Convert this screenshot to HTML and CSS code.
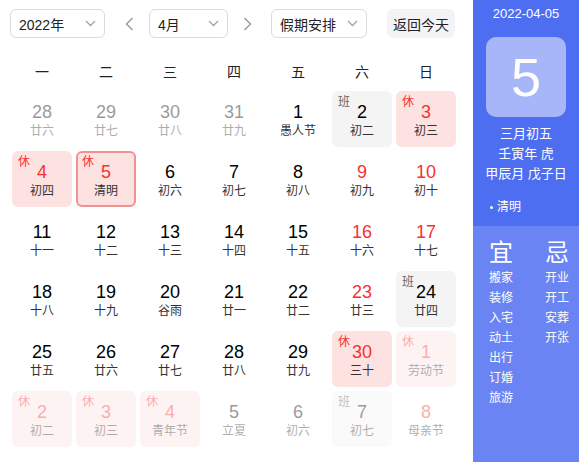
FILE: index.html
```html
<!DOCTYPE html>
<html>
<head>
<meta charset="utf-8">
<link rel="stylesheet" href="styles.css">
</head>
<body>
<div class="app">
  <div class="main">
    <div class="toolbar">
      <div class="select year"><span>2022年</span><svg class="chev" width="11" height="7" viewBox="0 0 11 7"><path d="M1 1l4.5 4.5L10 1" fill="none" stroke="#a0a3ab" stroke-width="1.3"/></svg></div>
      <svg class="arrow left" width="9" height="14" viewBox="0 0 9 14"><path d="M7.5 1L1.5 7l6 6" fill="none" stroke="#9a9da5" stroke-width="1.5"/></svg>
      <div class="select month"><span>4月</span><svg class="chev" width="11" height="7" viewBox="0 0 11 7"><path d="M1 1l4.5 4.5L10 1" fill="none" stroke="#a0a3ab" stroke-width="1.3"/></svg></div>
      <svg class="arrow right" width="9" height="14" viewBox="0 0 9 14"><path d="M1.5 1l6 6-6 6" fill="none" stroke="#9a9da5" stroke-width="1.5"/></svg>
      <div class="select holiday"><span>假期安排</span><svg class="chev" width="11" height="7" viewBox="0 0 11 7"><path d="M1 1l4.5 4.5L10 1" fill="none" stroke="#a0a3ab" stroke-width="1.3"/></svg></div>
      <div class="today-btn">返回今天</div>
    </div>
    <div class="weekdays">
      <div>一</div><div>二</div><div>三</div><div>四</div><div>五</div><div>六</div><div>日</div>
    </div>
    <div class="grid">
      <div class="cell other"><div class="num">28</div><div class="lunar">廿六</div></div>
      <div class="cell other"><div class="num">29</div><div class="lunar">廿七</div></div>
      <div class="cell other"><div class="num">30</div><div class="lunar">廿八</div></div>
      <div class="cell other"><div class="num">31</div><div class="lunar">廿九</div></div>
      <div class="cell"><div class="num">1</div><div class="lunar">愚人节</div></div>
      <div class="cell work"><span class="mark">班</span><div class="num">2</div><div class="lunar">初二</div></div>
      <div class="cell rest"><span class="mark">休</span><div class="num red">3</div><div class="lunar">初三</div></div>

      <div class="cell rest"><span class="mark">休</span><div class="num red">4</div><div class="lunar">初四</div></div>
      <div class="cell rest selected"><span class="mark">休</span><div class="num red">5</div><div class="lunar">清明</div></div>
      <div class="cell"><div class="num">6</div><div class="lunar">初六</div></div>
      <div class="cell"><div class="num">7</div><div class="lunar">初七</div></div>
      <div class="cell"><div class="num">8</div><div class="lunar">初八</div></div>
      <div class="cell"><div class="num red">9</div><div class="lunar">初九</div></div>
      <div class="cell"><div class="num red">10</div><div class="lunar">初十</div></div>

      <div class="cell"><div class="num">11</div><div class="lunar">十一</div></div>
      <div class="cell"><div class="num">12</div><div class="lunar">十二</div></div>
      <div class="cell"><div class="num">13</div><div class="lunar">十三</div></div>
      <div class="cell"><div class="num">14</div><div class="lunar">十四</div></div>
      <div class="cell"><div class="num">15</div><div class="lunar">十五</div></div>
      <div class="cell"><div class="num red">16</div><div class="lunar">十六</div></div>
      <div class="cell"><div class="num red">17</div><div class="lunar">十七</div></div>

      <div class="cell"><div class="num">18</div><div class="lunar">十八</div></div>
      <div class="cell"><div class="num">19</div><div class="lunar">十九</div></div>
      <div class="cell"><div class="num">20</div><div class="lunar">谷雨</div></div>
      <div class="cell"><div class="num">21</div><div class="lunar">廿一</div></div>
      <div class="cell"><div class="num">22</div><div class="lunar">廿二</div></div>
      <div class="cell"><div class="num red">23</div><div class="lunar">廿三</div></div>
      <div class="cell work"><span class="mark">班</span><div class="num">24</div><div class="lunar">廿四</div></div>

      <div class="cell"><div class="num">25</div><div class="lunar">廿五</div></div>
      <div class="cell"><div class="num">26</div><div class="lunar">廿六</div></div>
      <div class="cell"><div class="num">27</div><div class="lunar">廿七</div></div>
      <div class="cell"><div class="num">28</div><div class="lunar">廿八</div></div>
      <div class="cell"><div class="num">29</div><div class="lunar">廿九</div></div>
      <div class="cell rest"><span class="mark">休</span><div class="num red">30</div><div class="lunar">三十</div></div>
      <div class="cell rest other"><span class="mark">休</span><div class="num red">1</div><div class="lunar">劳动节</div></div>

      <div class="cell rest other"><span class="mark">休</span><div class="num red">2</div><div class="lunar">初二</div></div>
      <div class="cell rest other"><span class="mark">休</span><div class="num red">3</div><div class="lunar">初三</div></div>
      <div class="cell rest other"><span class="mark">休</span><div class="num red">4</div><div class="lunar">青年节</div></div>
      <div class="cell other"><div class="num">5</div><div class="lunar">立夏</div></div>
      <div class="cell other"><div class="num">6</div><div class="lunar">初六</div></div>
      <div class="cell work other"><span class="mark">班</span><div class="num">7</div><div class="lunar">初七</div></div>
      <div class="cell other"><div class="num red">8</div><div class="lunar">母亲节</div></div>
    </div>
  </div>
  <div class="side">
    <div class="side-top">
      <div class="date">2022-04-05</div>
      <div class="bigday">5</div>
      <div class="line first">三月初五</div>
      <div class="line">壬寅年 虎</div>
      <div class="line">甲辰月 戊子日</div>
      <div class="fest"><span class="dot"></span>清明</div>
    </div>
    <div class="side-bottom">
      <div class="col">
        <div class="head">宜</div>
        <div class="item">搬家</div>
        <div class="item">装修</div>
        <div class="item">入宅</div>
        <div class="item">动土</div>
        <div class="item">出行</div>
        <div class="item">订婚</div>
        <div class="item">旅游</div>
      </div>
      <div class="col">
        <div class="head">忌</div>
        <div class="item">开业</div>
        <div class="item">开工</div>
        <div class="item">安葬</div>
        <div class="item">开张</div>
      </div>
    </div>
  </div>
</div>
</body>
</html>
```

FILE: styles.css
```css
html, body {
  margin: 0;
  padding: 0;
  background: #fff;
}
body {
  font-family: "Liberation Sans", Arial, "Noto Sans CJK SC", sans-serif;
  color: #333;
}
.app {
  display: flex;
  width: 579px;
  height: 462px;
}
.main {
  width: 473px;
  flex: none;
}
.toolbar {
  display: flex;
  align-items: center;
  height: 29px;
  margin-top: 9px;
  padding-left: 10px;
}
.select {
  box-sizing: border-box;
  height: 29px;
  border: 1px solid #d9dbe0;
  border-radius: 6px;
  display: flex;
  align-items: center;
  justify-content: space-between;
  padding: 0 8px 0 8px;
  font-size: 14px;
  color: #222;
}
.select.year { width: 95px; }
.select.month { width: 79px; }
.select.holiday { width: 96px; }
.chev { flex: none; }
.arrow { flex: none; }
.arrow.left { margin: 0 15px 0 20px; }
.arrow.right { margin: 0 19px 0 15px; }
.today-btn {
  margin-left: 20px;
  height: 29px;
  width: 68px;
  border-radius: 6px;
  background: #f4f4f6;
  font-size: 14px;
  color: #222;
  display: flex;
  align-items: center;
  justify-content: center;
}
.weekdays {
  display: grid;
  grid-template-columns: repeat(7, 60px);
  column-gap: 4px;
  padding-left: 12px;
  margin-top: 24px;
  height: 20px;
  line-height: 20px;
  font-size: 14px;
  color: #222;
  text-align: center;
}
.grid {
  display: grid;
  grid-template-columns: repeat(7, 60px);
  grid-auto-rows: 56px;
  gap: 4px;
  padding-left: 12px;
  margin-top: 9px;
}
.cell {
  position: relative;
  box-sizing: border-box;
  border-radius: 6px;
  text-align: center;
  padding-top: 10px;
}
.cell.other { opacity: 0.4; }
.cell.rest { background: #fde2e2; }
.cell.work { background: #f4f4f5; }
.cell.selected { border: 2px solid #f19191; padding-top: 8px; }
.num {
  font-size: 18px;
  line-height: 22px;
  color: #000;
}
.num.red { color: #f73131; }
.lunar {
  font-size: 12px;
  line-height: 16px;
  color: #333;
}
.mark {
  position: absolute;
  top: 4px;
  left: 6px;
  font-size: 12px;
  line-height: 14px;
}
.rest .mark { color: #f73131; }
.work .mark { color: #666; }
.selected .mark { top: 2px; left: 4px; }
.side {
  width: 106px;
  flex: none;
  display: flex;
  flex-direction: column;
  color: #fff;
}
.side-top {
  background: #4e6ef2;
  height: 226px;
  box-sizing: border-box;
  padding-top: 4px;
  display: flex;
  flex-direction: column;
  align-items: center;
}
.date {
  font-size: 13px;
  line-height: 20px;
}
.bigday {
  margin-top: 13px;
  width: 80px;
  height: 80px;
  border-radius: 10px;
  background: #a7b6f8;
  font-size: 54px;
  line-height: 80px;
  text-align: center;
}
.line {
  font-size: 13px;
  line-height: 20px;
}
.line.first { margin-top: 7px; }
.fest {
  align-self: flex-start;
  margin-left: 17px;
  margin-top: 13px;
  font-size: 12px;
  line-height: 20px;
  display: flex;
  align-items: center;
}
.dot {
  width: 3px;
  height: 3px;
  border-radius: 50%;
  background: #fff;
  margin-right: 4px;
}
.side-bottom {
  flex: 1;
  box-sizing: border-box;
  background: #6a84f4;
  display: flex;
  padding: 12px 0 0 16px;
}
.col {
  flex: none;
  width: 56px;
}
.head {
  font-size: 24px;
  line-height: 30px;
}
.item {
  font-size: 12px;
  line-height: 20px;
}
```
